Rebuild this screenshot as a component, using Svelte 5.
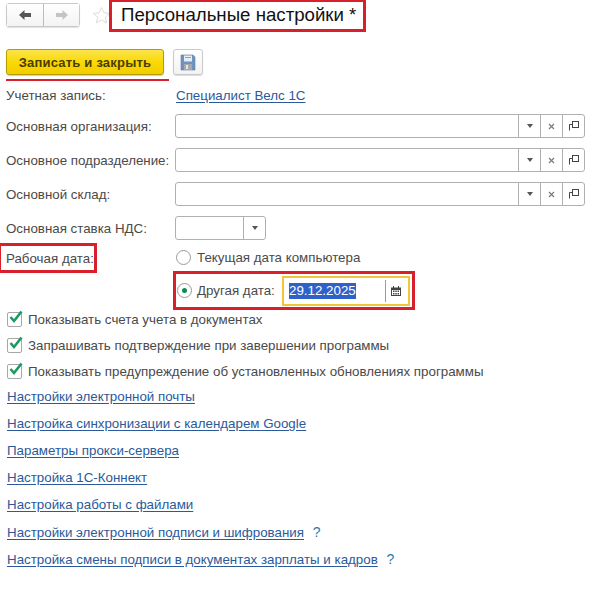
<script>
    const fields = ['Основная организация:', 'Основное подразделение:', 'Основной склад:'];
    const checks = [
        'Показывать счета учета в документах',
        'Запрашивать подтверждение при завершении программы',
        'Показывать предупреждение об установленных обновлениях программы'
    ];
    const links = [
        { text: 'Настройки электронной почты' },
        { text: 'Настройка синхронизации с календарем Google' },
        { text: 'Параметры прокси-сервера' },
        { text: 'Настройка 1С-Коннект' },
        { text: 'Настройка работы с файлами' },
        { text: 'Настройки электронной подписи и шифрования', help: true },
        { text: 'Настройка смены подписи в документах зарплаты и кадров', help: true }
    ];
</script>

<div class="page">
    <header class="top">
        <div class="nav">
            <button class="nav-btn back" aria-label="Назад">
                <svg width="14" height="12" viewBox="0 0 14 12"><path d="M6.500 1 1 6l5.500 5V8H13V4H6.500z" fill="#555"/></svg>
            </button>
            <button class="nav-btn" aria-label="Вперед">
                <svg width="14" height="12" viewBox="0 0 14 12"><path d="M7.500 1 13 6l-5.500 5V8H1V4h6.500z" fill="#c4c4c4"/></svg>
            </button>
        </div>
        <svg class="star" width="19" height="19" viewBox="0 0 19 19"><path d="m9.500 1.500 2.400 5.300 5.700.6-4.300 3.800 1.300 5.700-5.100-3-5.100 3 1.300-5.700-4.300-3.800 5.700-.6z" fill="#fff" stroke="#dcdcdc"/></svg>
        <h1 class="title">Персональные настройки *</h1>
    </header>

    <div class="commands">
        <div class="primary-wrap">
            <button class="primary">Записать и закрыть</button>
        </div>
        <button class="save" aria-label="Сохранить">
            <svg width="16" height="17" viewBox="0 0 16 17">
                <path d="M1 1h12l2 2v13H1z" fill="#6f93bd" stroke="#5c7fa8" stroke-width=".6"/>
                <rect x="4" y="1.500" width="8" height="6" fill="#e6edf5"/>
                <rect x="5" y="3" width="6" height="1" fill="#8aa5c4"/>
                <rect x="4" y="10" width="8" height="6" fill="#a7a9ad"/>
                <rect x="6" y="11" width="2" height="4" fill="#e8e8e8"/>
            </svg>
        </button>
    </div>

    <div class="row account">
        <span class="label">Учетная запись:</span>
        <a href="#account" class="link">Специалист Велс 1С</a>
    </div>

    {#each fields as field}
        <div class="row field-row">
            <span class="label">{field}</span>
            <div class="input wide">
                <div class="grow"></div>
                <span class="seg"><svg width="6" height="4" viewBox="0 0 6 4"><path d="M0 0h6L3 4z" fill="#555"/></svg></span>
                <span class="seg"><svg width="7" height="7" viewBox="0 0 7 7"><path d="m1 1 5 5M6 1 1 6" stroke="#777" stroke-width="1.100"/></svg></span>
                <span class="seg"><svg width="10" height="10" viewBox="0 0 10 10" fill="none" stroke="#444"><rect x="3.500" y=".5" width="6" height="6" /><path d="M3 3.500H.5v6"/></svg></span>
            </div>
        </div>
    {/each}

    <div class="row field-row">
        <span class="label">Основная ставка НДС:</span>
        <div class="input vat">
            <div class="grow"></div>
            <span class="seg"><svg width="6" height="4" viewBox="0 0 6 4"><path d="M0 0h6L3 4z" fill="#555"/></svg></span>
        </div>
    </div>

    <div class="work-date">
        <div class="label-col"><span class="label marked">Рабочая дата:</span></div>
        <div class="radios">
            <label class="radio-row first">
                <span class="radio"></span>
                <span class="radio-text">Текущая дата компьютера</span>
            </label>
            <div class="radio-row other">
                <span class="radio on"></span>
                <span class="radio-text fixed">Другая дата:</span>
                <div class="date-input">
                    <span class="date-value"><span class="selected">29.12.2025</span></span>
                    <span class="date-btn">
                        <svg width="10" height="10" viewBox="0 0 10 10">
                            <path d="M0 1.500h10V10H0z" fill="#444"/>
                            <path d="M2 0h1v2H2zM7 0h1v2H7z" fill="#444"/>
                            <path d="M1 4h8v5H1z" fill="#fff"/>
                            <path d="M2 4.500h1.500V6H2zM4.300 4.500h1.500V6H4.300zM6.600 4.500h1.400V6H6.600zM2 7h1.500v1.400H2zM4.300 7h1.500v1.400H4.300zM6.600 7h1.400v1.400H6.600z" fill="#444"/>
                        </svg>
                    </span>
                </div>
            </div>
        </div>
    </div>

    <div class="checks">
        {#each checks as check}
            <div class="check-row">
                <span class="box">
                    <svg width="17" height="16" viewBox="0 0 17 16"><path d="m3.500 7 3.500 4L14.500 1.500" fill="none" stroke="#1d9a63" stroke-width="2.600"/></svg>
                </span>
                <span class="label">{check}</span>
            </div>
        {/each}
    </div>

    <div class="links">
        {#each links as item}
            <div class="link-row">
                <a href="#settings" class="link">{item.text}</a>
                {#if item.help}<span class="help">?</span>{/if}
            </div>
        {/each}
    </div>
</div>

<style>
    :global(body) {
        margin: 0;
        background: #fff;
    }

    .page {
        width: 611px;
        height: 614px;
        overflow: hidden;
        box-sizing: border-box;
        font-family: "Liberation Sans", Arial, sans-serif;
        font-size: 13.33px;
        color: #4a4a4a;
    }

    button {
        padding: 0;
        font-family: inherit;
    }

    .top {
        display: flex;
        align-items: flex-start;
        height: 49px;
        padding-left: 6px;
    }

    .nav {
        display: flex;
        width: 74px;
        height: 24px;
        margin-top: 3px;
        border: 1px solid #c9c9c9;
        border-radius: 3px;
        box-sizing: border-box;
        box-shadow: 0 1px 1px rgba(0, 0, 0, 0.12);
    }

    .nav-btn {
        flex: 1;
        display: flex;
        align-items: center;
        justify-content: center;
        border: none;
        background: linear-gradient(#fff, #f3f3f3);
    }

    .nav-btn.back {
        flex: none;
        width: 37px;
        border-right: 1px solid #bdbdbd;
    }

    .star {
        margin: 6px 0 0 12px;
    }

    .title {
        margin: 0 0 0 -2px;
        width: 257px;
        height: 32px;
        box-sizing: border-box;
        padding: 1px 0 0 9px;
        border: 3px solid #d81f2c;
        border-top-width: 2px;
        background: #fff;
        font-size: 18.67px;
        line-height: 24px;
        font-weight: 400;
        color: #111;
        white-space: nowrap;
    }

    .commands {
        display: flex;
        align-items: flex-start;
        height: 33px;
        padding-left: 6px;
    }

    .primary-wrap {
        width: 163px;
        height: 32px;
        box-sizing: border-box;
        border-bottom: 2px solid #d81f2c;
    }

    .primary {
        display: block;
        width: 158px;
        height: 26px;
        border: 1px solid #b59c00;
        border-radius: 3px;
        background: linear-gradient(#fbe44c, #f9d800 55%, #f2cd00);
        box-shadow: 0 1px 1px rgba(0, 0, 0, 0.2);
        font-size: 13px;
        font-weight: 700;
        letter-spacing: 0.2px;
        color: #4a3c00;
    }

    .save {
        display: flex;
        align-items: center;
        justify-content: center;
        width: 30px;
        height: 26px;
        margin-left: 4px;
        border: 1px solid #c9c9c9;
        border-radius: 3px;
        background: linear-gradient(#fff, #f3f3f3);
        box-shadow: 0 1px 1px rgba(0, 0, 0, 0.15);
    }

    .row {
        display: flex;
        align-items: center;
        padding-left: 6px;
    }

    .row .label {
        width: 169px;
        flex: none;
        white-space: nowrap;
    }

    .account {
        height: 16px;
        margin-top: 5px;
    }

    .account .label {
        width: 170px;
    }

    .field-row {
        height: 24px;
        margin-bottom: 10px;
    }

    .account + .field-row {
        margin-top: 11px;
    }

    .input {
        display: flex;
        height: 24px;
        box-sizing: border-box;
        border: 1px solid #b0b0b0;
        border-radius: 3px;
        background: #fff;
    }

    .input.wide {
        width: 410px;
    }

    .input.vat {
        width: 91px;
    }

    .grow {
        flex: 1;
    }

    .seg {
        display: flex;
        align-items: center;
        justify-content: center;
        width: 21px;
        border-left: 1px solid #b0b0b0;
    }

    .work-date {
        display: flex;
        margin-top: -7px;
    }

    .label-col {
        width: 173px;
        flex: none;
    }

    .marked {
        display: block;
        width: 97px;
        height: 30px;
        box-sizing: border-box;
        padding: 5px 0 0 5px;
        border: 3px solid #d81f2c;
        border-left-width: 1px;
        white-space: nowrap;
    }

    .radios {
        display: flex;
        flex-direction: column;
    }

    .radio-row {
        display: flex;
        align-items: center;
    }

    .radio-row.first {
        height: 28px;
        padding-left: 3px;
    }

    .radio-row.other {
        width: 242px;
        height: 39px;
        box-sizing: border-box;
        padding-left: 1px;
        border: 3px solid #d81f2c;
    }

    .radio {
        position: relative;
        flex: none;
        width: 15px;
        height: 15px;
        box-sizing: border-box;
        border: 1px solid #9a9a9a;
        border-radius: 50%;
        background: #fff;
    }

    .radio.on::after {
        content: "";
        position: absolute;
        top: 4px;
        left: 4px;
        width: 5px;
        height: 5px;
        border-radius: 50%;
        background: #0f8a55;
    }

    .radio-text {
        margin-left: 6px;
        white-space: nowrap;
    }

    .radio-text.fixed {
        width: 78px;
        margin-left: 5px;
    }

    .date-input {
        display: flex;
        width: 128px;
        height: 30px;
        box-sizing: border-box;
        margin-left: 7px;
        border: 2px solid #f0c63a;
    }

    .date-value {
        display: flex;
        align-items: center;
        width: 102px;
        padding-left: 5px;
        box-sizing: border-box;
        border-right: 1px solid #9a9a9a;
        margin: 2px 0;
    }

    .selected {
        background: #2f62c9;
        color: #fff;
        line-height: 16px;
    }

    .date-btn {
        flex: 1;
        display: flex;
        align-items: center;
        justify-content: center;
        padding-right: 2px;
    }

    .checks {
        margin-top: 1px;
        padding-left: 7px;
    }

    .check-row {
        display: flex;
        align-items: center;
        height: 16px;
        margin-bottom: 10px;
        white-space: nowrap;
    }

    .box {
        position: relative;
        flex: none;
        width: 15px;
        height: 15px;
        box-sizing: border-box;
        margin-right: 6px;
        border: 1px solid #a8a8a8;
        border-radius: 2px;
        background: #fff;
    }

    .box svg {
        position: absolute;
        top: -3px;
        left: -1px;
    }

    .links {
        margin-top: 5px;
        padding-left: 7px;
    }

    .link-row {
        height: 27px;
        line-height: 16px;
        white-space: nowrap;
    }

    .link {
        color: #2a5a9b;
        text-decoration: underline;
        text-underline-offset: 2px;
    }

    .help {
        margin-left: 5px;
        font-size: 14px;
        color: #2f79b0;
    }
</style>
